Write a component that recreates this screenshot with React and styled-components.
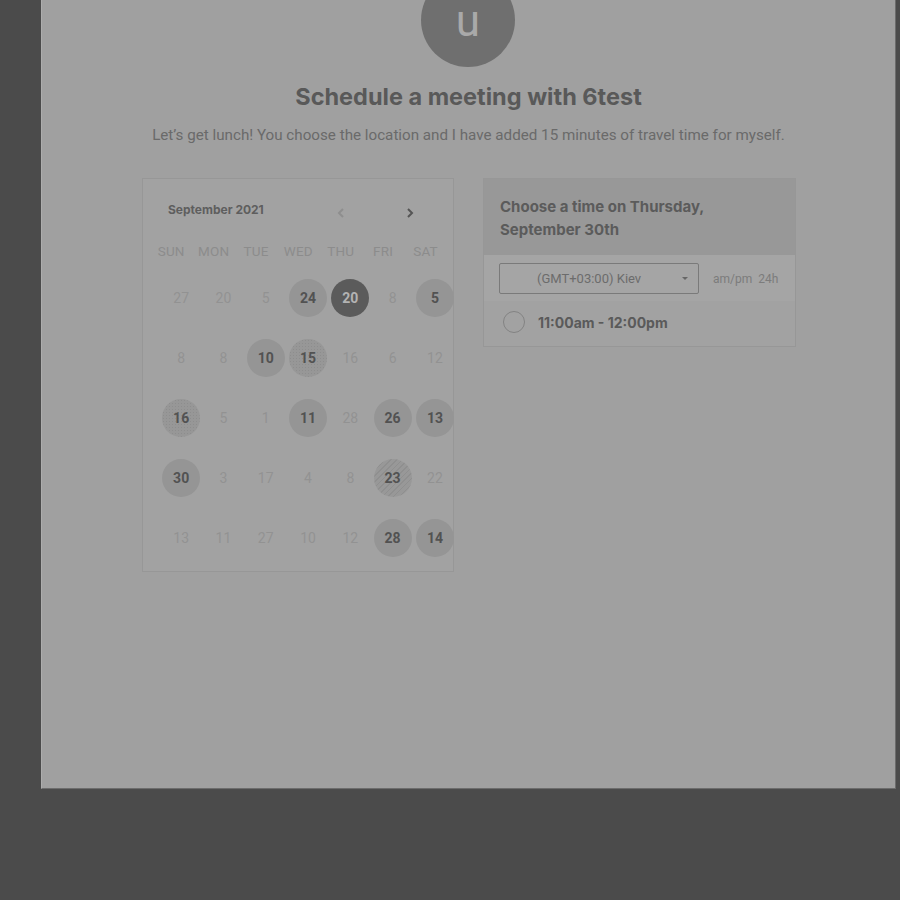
import React from "react";
import styled, { createGlobalStyle, css } from "styled-components";

const Global = createGlobalStyle`
  html, body { margin: 0; padding: 0; background: #4b4b4b; }
  body { font-family: Roboto, "Liberation Sans", sans-serif; }
`;

const Page = styled.div`
  width: 900px;
  height: 900px;
  background: #4b4b4b;
  overflow: hidden;
`;

const Panel = styled.main`
  margin-left: 41px;
  width: 853px;
  height: 788px;
  background: #a0a0a0;
  border-left: 1px solid #adadad;
  border-right: 1px solid #6c6c6c;
  border-bottom: 1px solid #6c6c6c;
  display: flex;
  flex-direction: column;
  align-items: center;
  overflow: hidden;
`;

const Avatar = styled.div`
  margin-top: -27px;
  width: 94px;
  height: 94px;
  border-radius: 50%;
  background: #6f6f6f;
  color: #a9a9a9;
  display: flex;
  align-items: flex-end;
  justify-content: center;
  font-family: Roboto, sans-serif;
  font-size: 44px;
  line-height: 30px;
  padding-bottom: 31px;
  box-sizing: border-box;
  margin-left: -1px;
`;

const Title = styled.h1`
  margin: 16px 0 0;
  font-family: Inter, "Noto Sans", sans-serif;
  font-weight: 700;
  font-size: 23.5px;
  line-height: 28px;
  color: #595959;
`;

const Subtitle = styled.p`
  margin: 15px 0 0;
  font-family: Roboto, sans-serif;
  font-size: 15.2px;
  line-height: 18px;
  color: #6a6a6a;
`;

const Cards = styled.div`
  margin-top: 34px;
  display: flex;
  gap: 29px;
  align-items: flex-start;
  margin-left: 1px;
`;

const Card = styled.section`
  background: #a2a2a2;
  border: 1px solid #979797;
  box-sizing: border-box;
  width: ${(p) => p.$w}px;
`;

const CalHead = styled.div`
  display: flex;
  align-items: center;
  padding: 21px 37px 0 25px;
  height: 18px;
`;

const Month = styled.div`
  font-family: Inter, sans-serif;
  font-weight: 700;
  font-size: 12px;
  color: #5e5e5e;
`;

const Nav = styled.div`
  margin-left: auto;
  display: flex;
  gap: 57px;
  padding-top: 7px;
`;

const Chevron = styled.svg`
  width: 12px;
  height: 12px;
  stroke: ${(p) => (p.$dim ? "#8e8e8e" : "#555")};
  stroke-width: 2;
  fill: none;
`;

const WeekRow = styled.div`
  display: grid;
  grid-template-columns: repeat(7, 42.4px);
  padding-left: 7px;
  margin-top: 24px;
  height: 18px;
  align-items: center;
`;

const WeekDay = styled.div`
  text-align: center;
  font-size: 13.5px;
  color: #8c8c8c;
  letter-spacing: 0.2px;
`;

const DayGrid = styled.div`
  display: grid;
  grid-template-columns: repeat(7, 42.3px);
  grid-auto-rows: 60px;
  padding: 8px 0 3px 17px;
  width: 296px;
`;

const DayCell = styled.div`
  display: flex;
  align-items: center;
  justify-content: center;
`;

const Day = styled.span`
  width: 38px;
  height: 38px;
  border-radius: 50%;
  display: flex;
  align-items: center;
  justify-content: center;
  font-size: 14px;
  color: #929292;
  ${(p) =>
    p.$kind === "open" &&
    css`
      background: #959595;
      color: #525252;
      font-weight: 700;
    `}
  ${(p) =>
    p.$kind === "sel" &&
    css`
      background: #5b5b5b;
      color: #b3b3b3;
      font-weight: 700;
    `}
  ${(p) =>
    p.$kind === "dots" &&
    css`
      background: radial-gradient(circle, #8d8d8d 0.7px, transparent 1px) 0 0 / 3px 3px, #979797;
      color: #525252;
      font-weight: 700;
    `}
  ${(p) =>
    p.$kind === "hatch" &&
    css`
      background: repeating-linear-gradient(135deg, #8f8f8f 0 1px, #989898 1px 4px);
      color: #525252;
      font-weight: 700;
    `}
`;

const TimeHeader = styled.div`
  background: #989898;
  padding: 16px 16px 14px;
  font-family: Inter, sans-serif;
  font-weight: 700;
  font-size: 15px;
  line-height: 23px;
  color: #5b5b5b;
`;

const TzRow = styled.div`
  background: #a5a5a5;
  display: flex;
  align-items: center;
  padding: 8px 15px 7px 15px;
  gap: 14px;
`;

const Select = styled.div`
  width: 200px;
  height: 31px;
  box-sizing: border-box;
  border: 1px solid #7a7a7a;
  border-radius: 2px;
  display: flex;
  align-items: center;
  padding: 0 10px 0 37px;
  font-size: 13px;
  color: #6c6c6c;
`;

const Caret = styled.span`
  margin-left: auto;
  width: 0;
  height: 0;
  border-left: 3px solid transparent;
  border-right: 3px solid transparent;
  border-top: 3px solid #666;
`;

const Format = styled.div`
  font-size: 12px;
  color: #7c7c7c;
  word-spacing: 3px;
`;

const Slot = styled.div`
  display: flex;
  align-items: center;
  gap: 13px;
  padding: 10px 15px 13px 19px;
  height: 22px;
`;

const Radio = styled.span`
  width: 20px;
  height: 20px;
  border-radius: 50%;
  border: 1.5px solid #838383;
`;

const SlotText = styled.span`
  font-family: Inter, sans-serif;
  font-weight: 700;
  font-size: 14px;
  color: #5a5a5a;
`;

const days = [
  ["27", ""], ["20", ""], ["5", ""], ["24", "open"], ["20", "sel"], ["8", ""], ["5", "open"],
  ["8", ""], ["8", ""], ["10", "open"], ["15", "dots"], ["16", ""], ["6", ""], ["12", ""],
  ["16", "dots"], ["5", ""], ["1", ""], ["11", "open"], ["28", ""], ["26", "open"], ["13", "open"],
  ["30", "open"], ["3", ""], ["17", ""], ["4", ""], ["8", ""], ["23", "hatch"], ["22", ""],
  ["13", ""], ["11", ""], ["27", ""], ["10", ""], ["12", ""], ["28", "open"], ["14", "open"],
];

const weekdays = ["SUN", "MON", "TUE", "WED", "THU", "FRI", "SAT"];

export default function App() {
  return (
    <Page>
      <Global />
      <Panel>
        <Avatar>u</Avatar>
        <Title>Schedule a meeting with 6test</Title>
        <Subtitle>
          Let’s get lunch! You choose the location and I have added 15 minutes of travel time for myself.
        </Subtitle>
        <Cards>
          <Card $w={312}>
            <CalHead>
              <Month>September 2021</Month>
              <Nav>
                <Chevron $dim viewBox="0 0 12 12">
                  <path d="M8 2 L4 6 L8 10" />
                </Chevron>
                <Chevron viewBox="0 0 12 12">
                  <path d="M4 2 L8 6 L4 10" />
                </Chevron>
              </Nav>
            </CalHead>
            <WeekRow>
              {weekdays.map((w) => (
                <WeekDay key={w}>{w}</WeekDay>
              ))}
            </WeekRow>
            <DayGrid>
              {days.map(([n, k], i) => (
                <DayCell key={i}>
                  <Day $kind={k}>{n}</Day>
                </DayCell>
              ))}
            </DayGrid>
          </Card>
          <Card $w={313}>
            <TimeHeader>
              Choose a time on Thursday,
              <br />
              September 30th
            </TimeHeader>
            <TzRow>
              <Select>
                (GMT+03:00) Kiev
                <Caret />
              </Select>
              <Format>am/pm 24h</Format>
            </TzRow>
            <Slot>
              <Radio />
              <SlotText>11:00am - 12:00pm</SlotText>
            </Slot>
          </Card>
        </Cards>
      </Panel>
    </Page>
  );
}
